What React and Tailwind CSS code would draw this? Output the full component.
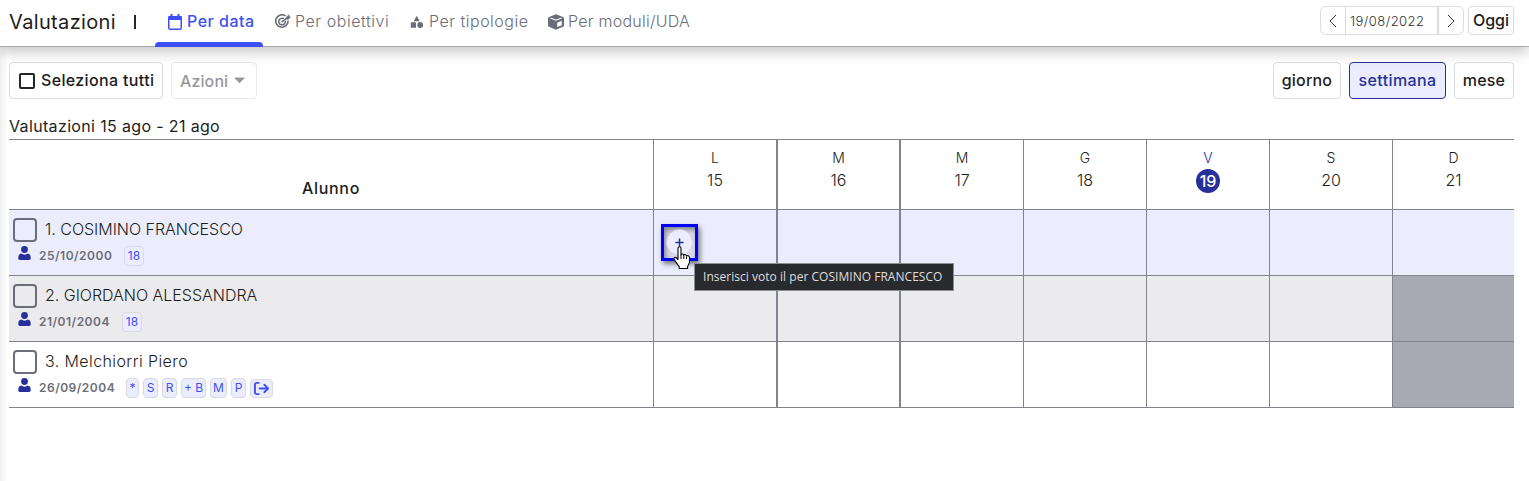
import React from 'react';
import { FaCaretDown } from 'react-icons/fa';
import { FaArrowRightFromBracket } from 'react-icons/fa6';

const days = [
  { letter: 'L', number: 15, border: 'border-l' },
  { letter: 'M', number: 16, border: 'border-l-2' },
  { letter: 'M', number: 17, border: 'border-l-2' },
  { letter: 'G', number: 18, border: 'border-l' },
  { letter: 'V', number: 19, border: 'border-l', today: true },
  { letter: 'S', number: 20, border: 'border-l' },
  { letter: 'D', number: 21, border: 'border-l', holiday: true },
];

const students = [
  { id: 1, name: '1. COSIMINO FRANCESCO', birth: '25/10/2000', tags: ['18'], bg: 'bg-[#ebedfd]', tracking: 'tracking-[-0.02px]', width: 'w-[73px]' },
  { id: 2, name: '2. GIORDANO ALESSANDRA', birth: '21/01/2004', tags: ['18'], bg: 'bg-[#ebebed]', tracking: 'tracking-[-0.02px]', width: 'w-[71px]' },
  { id: 3, name: '3. Melchiorri Piero', birth: '26/09/2004', tags: ['*', 'S', 'R', '+ B', 'M', 'P'], bg: 'bg-white', tracking: 'tracking-[0.4px]', width: 'w-[75px]' },
];

const tagWidths = { 18: 'w-5', '*': 'w-[13px]', S: 'w-[15px]', R: 'w-[15px]', '+ B': 'w-[25px]', M: 'w-[17px]', P: 'w-[15px]' };

const CalendarIcon = () => (
  <svg width="14" height="16" viewBox="0 0 14 16" fill="none">
    <rect x="0.75" y="2.75" width="12.5" height="12.5" rx="1.5" stroke="currentColor" strokeWidth="1.5" />
    <path d="M0 5V3.5Q0 2 1.5 2H2.5V0H4.5V2H9.5V0H11.5V2H12.5Q14 2 14 3.5V6H0Z" fill="currentColor" />
  </svg>
);

const TargetIcon = () => (
  <svg width="16" height="15" viewBox="0 0 16 15" fill="none" stroke="currentColor" strokeLinecap="round">
    <path d="M10 1.6A6.2 6.2 0 1 0 13.1 7" strokeWidth="1.6" />
    <path d="M8.3 4.5A3.3 3.3 0 1 0 10.3 7.3" strokeWidth="1.5" />
    <path d="M7 7.7L12 4" strokeWidth="1.5" />
    <path d="M11.3 3.2L14 0.8L14.3 2.5L15.5 3.2L13 5.4L11.4 5Z" fill="currentColor" strokeWidth="0.5" />
  </svg>
);

const ShapesIcon = () => (
  <svg width="14" height="14" viewBox="0 0 14 14" fill="currentColor">
    <path d="M6.7 0.8L9.7 6.2H3.7Z" />
    <rect x="0.8" y="7.3" width="5.2" height="5.4" rx="0.5" />
    <circle cx="10.2" cy="10" r="2.9" />
  </svg>
);

const CubeIcon = () => (
  <svg width="16" height="16" viewBox="0 0 16 16">
    <path d="M8 0.3L15 3Q16 3.4 16 4.4V11.5Q16 12.4 15.1 12.8L8 15.8L0.9 12.8Q0 12.4 0 11.5V4.4Q0 3.4 1 3Z" fill="currentColor" />
    <path d="M2.4 4L8 6.2L13.6 4" fill="none" stroke="white" strokeWidth="1.2" />
    <path d="M9.2 8.7L13.8 6.8V11.2L9.2 13.1Z" fill="white" />
  </svg>
);

const UserIcon = () => (
  <svg width="13" height="14" viewBox="0 0 13 14" fill="#27309a">
    <circle cx="6.5" cy="3.5" r="3.4" />
    <path d="M3.2 7.6Q4.8 8.7 6.5 8.7T9.8 7.6Q12.7 8.3 12.7 11.5V12.6Q12.7 14 11.3 14H1.7Q0.3 14 0.3 12.6V11.5Q0.3 8.3 3.2 7.6Z" />
  </svg>
);

const HandCursor = () => (
  <svg width="18" height="24" viewBox="0 0 18 24">
    <path
      d="M5 2.2C5 .3 8 .3 8 2.2V9C8.2 7.5 10.8 7.7 10.8 9.4C11.2 8.2 13.5 8.5 13.5 10.2C14 9.2 16.5 9.6 16.5 11.7V15.5C16.5 18 15 19 14.6 20.5V22.5H6.2V20.5C4.5 18.8 3 16 1.2 13.7C0 11.8 2.4 10.6 3.7 12.2L5 13.5Z"
      fill="white"
      stroke="black"
      strokeWidth="1.1"
      strokeLinejoin="round"
    />
    <path d="M8 9V13M10.8 10V13M13.5 11V13" stroke="black" strokeWidth="1" />
  </svg>
);

const Header = () => (
  <header className="relative z-10 h-[47px] flex justify-between bg-white border-b border-[#a9a9ac] shadow-[0_4px_14px_rgba(0,0,0,0.25)] w-[1529px]">
    <div className="flex">
      <h1 className="w-[106px] ml-[9px] mt-[7px] text-[20px] leading-[30px] tracking-[0.35px]">Valutazioni</h1>
      <span className="ml-[19px] mt-[15px] w-[2px] h-[14px] bg-[#26272b]" />
      <nav className="flex ml-[19px] text-base leading-6 text-[#6b6d78] font-light">
        <a className="relative w-[108px] flex pl-[13px] pt-[9px] text-[#3d50f5] font-medium">
          <span className="mt-[5px] w-[19px]"><CalendarIcon /></span>
          <span className="tracking-[0.5px] whitespace-nowrap">Per data</span>
          <span className="absolute left-0 bottom-[-1px] w-[108px] h-[5px] rounded-t bg-[#3d50f5]" />
        </a>
        <a className="w-[135px] flex pl-3 pt-[9px]">
          <span className="mt-[5px] w-5"><TargetIcon /></span>
          <span className="tracking-[0.55px] whitespace-nowrap">Per obiettivi</span>
        </a>
        <a className="w-[138px] flex pl-3 pt-[9px]">
          <span className="mt-1.5 w-[19px]"><ShapesIcon /></span>
          <span className="tracking-[0.5px] whitespace-nowrap">Per tipologie</span>
        </a>
        <a className="flex pl-3 pt-[9px]">
          <span className="mt-[5px] w-5"><CubeIcon /></span>
          <span className="tracking-[0.25px] whitespace-nowrap">Per moduli/UDA</span>
        </a>
      </nav>
    </div>
    <div className="flex gap-1 mt-1.5 mr-[15px]">
      <div className="flex w-36 h-[29px] border border-[#dcdce0] rounded-md text-[#303136]">
        <button className="w-[25px] flex items-center justify-center border-r border-[#dcdce0]">
          <svg width="8" height="14" viewBox="0 0 8 14" fill="none" stroke="currentColor"><path d="M7 1L1 7L7 13" /></svg>
        </button>
        <span className="w-[93px] pl-[4px] text-[13px] leading-[28px] tracking-[0.45px] font-light border-r-2 border-[#dcdce0]">19/08/2022</span>
        <button className="w-6 flex items-center justify-center">
          <svg width="8" height="14" viewBox="0 0 8 14" fill="none" stroke="currentColor"><path d="M1 1L7 7L1 13" /></svg>
        </button>
      </div>
      <button className="w-[46px] h-[29px] pb-0.5 text-base leading-6 font-medium border border-[#dcdce0] rounded">Oggi</button>
    </div>
  </header>
);

const Toolbar = () => (
  <div className="flex justify-between pt-[15px] font-medium text-base">
    <div className="flex gap-2">
      <button className="w-[154px] h-[37px] flex items-center pl-[9px] border border-[#dcdce0] rounded bg-white">
        <span className="w-4 h-4 border-2 border-[#26272b] rounded-[2px] mr-[6px]" />
        <span className="whitespace-nowrap tracking-[0.35px] pb-0.5">Seleziona tutti</span>
      </button>
      <button className="w-[86px] h-[37px] flex items-center pl-2 border border-[#eaeaec] rounded bg-white text-[#97979a]">
        <span className="w-[51px] text-left tracking-[0.1px]">Azioni</span>
        <FaCaretDown size={17} className="mb-0.5" />
      </button>
    </div>
    <div className="flex gap-2">
      <button className="w-[68px] h-[37px] pb-0.5 tracking-[0.2px] border border-[#dcdce0] rounded bg-white">giorno</button>
      <button className="w-[97px] h-[37px] pb-0.5 tracking-[0.4px] border border-[#27309a] rounded bg-[#ebedfd] text-[#27309a]">settimana</button>
      <button className="w-[60px] h-[37px] pb-0.5 tracking-[0.2px] border border-[#dcdce0] rounded bg-white">mese</button>
    </div>
  </div>
);

const AddGrade = () => (
  <div className="relative w-[37px] h-[37px] ml-[7px] mt-[14px] p-0.5 border-3 border-[#0000ff] bg-[#d9dbe9] shadow-[2px_3px_5px_rgba(0,0,0,0.5),inset_2px_3px_5px_rgba(0,0,0,0.4)]">
    <button className="w-[27px] h-[27px] flex items-center justify-center rounded-full border border-[#d0d1dc] bg-[#ebedfd]">
      <svg width="9" height="9" viewBox="0 0 9 9" stroke="#27309a" strokeWidth="1.5"><path d="M4.5 0.5V8.5M0.5 4.5H8.5" /></svg>
    </button>
    <span className="absolute left-[9px] top-[19px] z-20"><HandCursor /></span>
    <span className="absolute left-[30px] top-[36px] z-10 w-[260px] h-7 pl-[8px] bg-[#292a2e] border border-[#8d8e94] text-[#dedede] font-['Open_Sans',sans-serif] text-[12px] leading-[26px] tracking-[0.03px] whitespace-nowrap">
      Inserisci voto il per COSIMINO FRANCESCO
    </span>
  </div>
);

const App = () => {
  return (
    <div className="w-[1529px] h-[481px] overflow-hidden bg-white text-[#1c1d21] font-[Inter,sans-serif]">
      <Header />
      <main className="h-[434px] pl-[9px] pr-[15px] bg-[linear-gradient(to_right,#f0f0f0,#ffffff_8px)]">
        <Toolbar />
        <h2 className="h-10 pt-[15px] text-base leading-6 tracking-[0.35px]">Valutazioni 15 ago - 21 ago</h2>

        <div className="w-[1505px] border-b border-[#81838e]">
          <div className="grid grid-cols-[644px_123px_123px_124px_123px_123px_123px_122px] h-[70px] border-t border-[#81838e] bg-white">
            <div className="flex items-end justify-center pb-[9px] font-medium text-base leading-6 tracking-[0.7px]">Alunno</div>
            {days.map((day) => (
              <div key={day.number} className={`${day.border} border-[#81838e] flex flex-col items-center pt-2 font-light`}>
                <span className={`text-sm leading-5 h-[21px] ${day.today ? 'text-[#27309a]' : ''}`}>{day.letter}</span>
                <span className={`w-6 h-6 text-center text-base ${day.today ? 'leading-6 rounded-full bg-[#27309a] text-white font-medium' : 'leading-[23px]'}`}>
                  {day.number}
                </span>
              </div>
            ))}
          </div>

          {students.map((student) => (
            <div
              key={student.id}
              className={`grid grid-cols-[644px_123px_123px_124px_123px_123px_123px_122px] h-[66px] border-t border-[#81838e] ${student.bg}`}
            >
              <div className="pl-1 pt-2">
                <div className="flex h-6">
                  <span className="w-6 h-6 border-2 border-[#6b6d78] rounded bg-transparent" />
                  <span className={`ml-2 text-base leading-[23px] font-light ${student.tracking}`}>{student.name}</span>
                </div>
                <div className="flex pl-[5px] pt-[3px]">
                  <span className="mt-px w-[21px]"><UserIcon /></span>
                  <span className={`text-xs leading-[22px] font-semibold tracking-[0.5px] text-[#6b6d78] ${student.width}`}>{student.birth}</span>
                  <div className="flex gap-1 ml-3">
                    {student.tags.map((tag) => (
                      <span
                        key={tag}
                        className={`h-5 mt-px rounded border border-[#d9dae3] bg-[#ebedfd] text-[#3d50f5] text-xs leading-[18px] text-center whitespace-nowrap ${tagWidths[tag]}`}
                      >
                        {tag}
                      </span>
                    ))}
                    {student.id === 3 && (
                      <span className="w-[23px] h-[19px] mt-0.5 flex items-center justify-center rounded border border-[#d9dae3] bg-[#ebedfd] text-[#3d50f5]">
                        <FaArrowRightFromBracket size={15} />
                      </span>
                    )}
                  </div>
                </div>
              </div>
              {days.map((day) => (
                <div
                  key={day.number}
                  className={`${day.border} border-[#81838e] ${day.holiday && student.id > 1 ? 'bg-[#a9a9b3]' : ''}`}
                >
                  {student.id === 1 && day.number === 15 && <AddGrade />}
                </div>
              ))}
            </div>
          ))}
        </div>
      </main>
    </div>
  );
};

export default App;
